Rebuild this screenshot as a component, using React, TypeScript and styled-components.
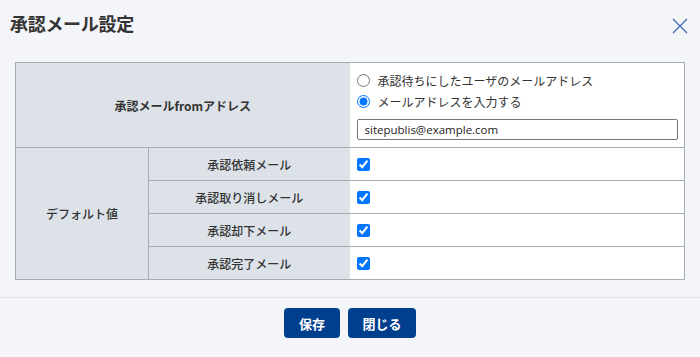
import React from "react";
import styled, { createGlobalStyle } from "styled-components";

const GlobalStyle = createGlobalStyle`
  html, body {
    margin: 0;
    padding: 0;
    background: #f4f5f9;
  }
  body {
    font-family: "Noto Sans CJK JP", "Noto Sans", sans-serif;
    color: #333;
  }
`;

// Dialog shell
const Dialog = styled.div`
  width: 700px;
  height: 357px;
  background: #f4f5f9;
  display: flex;
  flex-direction: column;
  box-sizing: border-box;
`;

const Header = styled.div`
  display: flex;
  justify-content: space-between;
  align-items: center;
  height: 48px;
  padding: 0 12px 0 10px;
  flex-shrink: 0;
`;

const Title = styled.h2`
  margin: 0;
  font-size: 18px;
  font-weight: 700;
  color: #333;
  letter-spacing: -0.3px;
  line-height: 1;
  margin-top: -3px;
`;

const CloseButton = styled.button`
  border: none;
  background: none;
  padding: 0;
  width: 17px;
  height: 17px;
  display: flex;
  align-items: center;
  justify-content: center;
  cursor: pointer;
  margin-top: 3px;
`;

const Body = styled.div`
  padding: 14px 15px 17px 15px;
  border-bottom: 1px solid #dfe1e7;
`;

// Table
const SettingsTable = styled.table`
  width: 670px;
  border-collapse: collapse;
  table-layout: fixed;
  font-size: 12px;
`;

const HeadCell = styled.th<{ $strong?: boolean }>`
  background: #dce2e8;
  border: 1px solid #a4adb7;
  font-weight: ${(p) => (p.$strong ? 700 : 500)};
  color: #333;
  text-align: center;
  vertical-align: middle;
  padding: 0;
`;

const ValueCell = styled.td<{ $height?: number }>`
  background: #fff;
  border: 1px solid #a4adb7;
  border-left: hidden;
  padding: 0 7px;
  vertical-align: middle;
  height: ${(p) => p.$height ?? 32}px;
  box-sizing: border-box;
`;

const FromCell = styled(ValueCell)`
  padding: 7px 7px 7px 7px;
`;

const RadioRow = styled.label`
  display: flex;
  align-items: center;
  gap: 8px;
  height: 21px;
  font-size: 12px;
  color: #333;
  cursor: pointer;
`;

const Radio = styled.input.attrs({ type: "radio" })`
  margin: 0;
  width: 13px;
  height: 13px;
  accent-color: #0075ff;
`;

const AddressInput = styled.input`
  display: block;
  margin-top: 7px;
  width: 321px;
  height: 21px;
  box-sizing: border-box;
  border: 1px solid #767676;
  border-radius: 2px;
  padding: 0 7px;
  font-family: "Open Sans", "Noto Sans", sans-serif;
  font-size: 11.5px;
  color: #222;
  background: #fff;
`;

const Check = styled.input.attrs({ type: "checkbox" })`
  display: block;
  margin: 0;
  width: 13px;
  height: 13px;
  accent-color: #0075ff;
`;

// Footer
const Footer = styled.div`
  display: flex;
  justify-content: center;
  gap: 8px;
  padding-top: 10px;
`;

const ActionButton = styled.button<{ $width: number }>`
  width: ${(p) => p.$width}px;
  height: 30px;
  border: none;
  border-radius: 4px;
  background: #003f8e;
  color: #fff;
  font-family: "Noto Sans CJK JP", sans-serif;
  font-size: 13px;
  font-weight: 700;
  cursor: pointer;
  padding: 0;
`;

const mailRows = ["承認依頼メール", "承認取り消しメール", "承認却下メール", "承認完了メール"];

export default function App() {
  const [mode, setMode] = React.useState("input");
  const [address, setAddress] = React.useState("sitepublis@example.com");
  const [checks, setChecks] = React.useState([true, true, true, true]);

  return (
    <>
      <GlobalStyle />
      <Dialog>
        <Header>
          <Title>承認メール設定</Title>
          <CloseButton aria-label="閉じる">
            <svg width="16" height="16" viewBox="0 0 16 16">
              <path d="M1 1 L15 15 M15 1 L1 15" stroke="#3b6db5" strokeWidth="1.3" fill="none" />
            </svg>
          </CloseButton>
        </Header>
        <Body>
          <SettingsTable>
            <colgroup>
              <col style={{ width: 133 }} />
              <col style={{ width: 201 }} />
              <col />
            </colgroup>
            <tbody>
              <tr>
                <HeadCell colSpan={2} $strong>
                  承認メールfromアドレス
                </HeadCell>
                <FromCell $height={85}>
                  <RadioRow>
                    <Radio
                      name="from"
                      checked={mode === "user"}
                      onChange={() => setMode("user")}
                    />
                    承認待ちにしたユーザのメールアドレス
                  </RadioRow>
                  <RadioRow>
                    <Radio
                      name="from"
                      checked={mode === "input"}
                      onChange={() => setMode("input")}
                    />
                    メールアドレスを入力する
                  </RadioRow>
                  <AddressInput
                    value={address}
                    onChange={(e) => setAddress(e.target.value)}
                  />
                </FromCell>
              </tr>
              {mailRows.map((label, i) => (
                <tr key={label}>
                  {i === 0 && <HeadCell rowSpan={mailRows.length}>デフォルト値</HeadCell>}
                  <HeadCell>{label}</HeadCell>
                  <ValueCell $height={33}>
                    <Check
                      checked={checks[i]}
                      onChange={() =>
                        setChecks((c) => c.map((v, j) => (j === i ? !v : v)))
                      }
                    />
                  </ValueCell>
                </tr>
              ))}
            </tbody>
          </SettingsTable>
        </Body>
        <Footer>
          <ActionButton $width={56}>保存</ActionButton>
          <ActionButton $width={68}>閉じる</ActionButton>
        </Footer>
      </Dialog>
    </>
  );
}
